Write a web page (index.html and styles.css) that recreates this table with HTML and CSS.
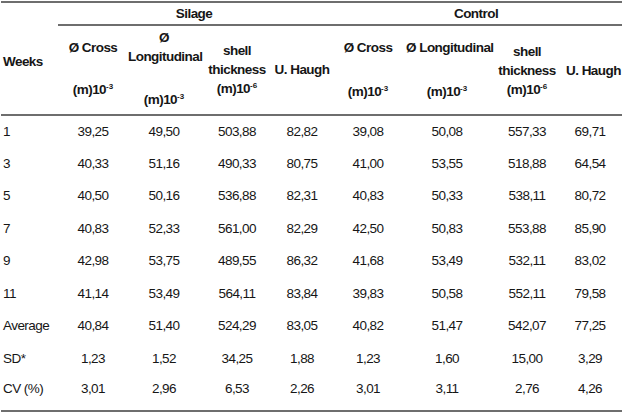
FILE: index.html
```html
<!DOCTYPE html>
<html>
<head>
<meta charset="utf-8">
<link rel="stylesheet" href="styles.css">
</head>
<body>
<table class="tbl">
  <colgroup>
    <col class="c-weeks">
    <col class="c-cross">
    <col class="c-long">
    <col class="c-shell">
    <col class="c-haugh">
    <col class="c-cross2">
    <col class="c-long2">
    <col class="c-shell2">
    <col class="c-haugh2">
  </colgroup>
  <thead>
    <tr class="group-row">
      <th class="weeks-head" rowspan="2"><div class="wk">Weeks</div></th>
      <th class="group" colspan="4">Silage</th>
      <th class="group" colspan="4">Control</th>
    </tr>
    <tr class="head-row">
      <th class="h s-cross"><div class="ln">Ø Cross</div><div class="ln unit u1">(m)10<sup>-3</sup></div></th>
      <th class="h s-long"><div class="ln">Ø</div><div class="ln">Longitudinal</div><div class="ln unit u2">(m)10<sup>-3</sup></div></th>
      <th class="h s-shell"><div class="ln">shell</div><div class="ln">thickness</div><div class="ln">(m)10<sup>-6</sup></div></th>
      <th class="h s-haugh"><div class="ln">U. Haugh</div></th>
      <th class="h c-cr"><div class="ln">Ø Cross</div><div class="ln unit u3">(m)10<sup>-3</sup></div></th>
      <th class="h c-lo"><div class="ln">Ø Longitudinal</div><div class="ln unit u3">(m)10<sup>-3</sup></div></th>
      <th class="h c-sh"><div class="ln">shell</div><div class="ln">thickness</div><div class="ln">(m)10<sup>-6</sup></div></th>
      <th class="h c-ha last"><div class="ln">U. Haugh</div></th>
    </tr>
  </thead>
  <tbody>
    <tr><td class="lbl">1</td><td>39,25</td><td>49,50</td><td>503,88</td><td>82,82</td><td>39,08</td><td>50,08</td><td>557,33</td><td class="last">69,71</td></tr>
    <tr><td class="lbl">3</td><td>40,33</td><td>51,16</td><td>490,33</td><td>80,75</td><td>41,00</td><td>53,55</td><td>518,88</td><td class="last">64,54</td></tr>
    <tr><td class="lbl">5</td><td>40,50</td><td>50,16</td><td>536,88</td><td>82,31</td><td>40,83</td><td>50,33</td><td>538,11</td><td class="last">80,72</td></tr>
    <tr><td class="lbl">7</td><td>40,83</td><td>52,33</td><td>561,00</td><td>82,29</td><td>42,50</td><td>50,83</td><td>553,88</td><td class="last">85,90</td></tr>
    <tr><td class="lbl">9</td><td>42,98</td><td>53,75</td><td>489,55</td><td>86,32</td><td>41,68</td><td>53,49</td><td>532,11</td><td class="last">83,02</td></tr>
    <tr><td class="lbl">11</td><td>41,14</td><td>53,49</td><td>564,11</td><td>83,84</td><td>39,83</td><td>50,58</td><td>552,11</td><td class="last">79,58</td></tr>
    <tr><td class="lbl">Average</td><td>40,84</td><td>51,40</td><td>524,29</td><td>83,05</td><td>40,82</td><td>51,47</td><td>542,07</td><td class="last">77,25</td></tr>
    <tr><td class="lbl">SD*</td><td>1,23</td><td>1,52</td><td>34,25</td><td>1,88</td><td>1,23</td><td>1,60</td><td>15,00</td><td class="last">3,29</td></tr>
    <tr class="final"><td class="lbl">CV (%)</td><td>3,01</td><td>2,96</td><td>6,53</td><td>2,26</td><td>3,01</td><td>3,11</td><td>2,76</td><td class="last">4,26</td></tr>
  </tbody>
</table>
</body>
</html>
```

FILE: styles.css
```css
html, body {
  margin: 0;
  padding: 0;
  background: #ffffff;
}

body {
  padding: 1px 0 0 1px;
  font-family: "Liberation Sans", Arial, sans-serif;
  font-size: 13.5px;
  letter-spacing: -0.55px;
  color: #161616;
}

.tbl {
  border-collapse: collapse;
  table-layout: fixed;
  width: 621px;
  border-top: 2px solid #6e6e6e;
  border-bottom: 2px solid #6e6e6e;
}

.c-weeks { width: 57px; }
.c-cross { width: 70px; }
.c-long { width: 72px; }
.c-shell { width: 74px; }
.c-haugh { width: 56px; }
.c-cross2 { width: 76px; }
.c-long2 { width: 82px; }
.c-shell2 { width: 78px; }
.c-haugh2 { width: 56px; }

th, td {
  padding: 0;
  font-weight: normal;
  text-align: center;
  white-space: nowrap;
}

th {
  font-weight: bold;
}

.group-row {
  height: 23px;
}

.group-row th.group {
  border-bottom: 2px solid #6e6e6e;
  vertical-align: middle;
  line-height: 20px;
}

.weeks-head {
  text-align: left;
  vertical-align: top;
  padding-left: 2px;
  border-bottom: 2px solid #6e6e6e;
}

.wk {
  padding-top: 49px;
  line-height: 19px;
}

.head-row {
  height: 90px;
}

.head-row th {
  vertical-align: top;
  border-bottom: 2px solid #6e6e6e;
}

.ln {
  line-height: 19px;
  height: 19px;
}

.s-cross { padding-top: 12px; }
.s-long { padding-top: 2px; }
.s-shell { padding-top: 15px; }
.s-haugh { padding-top: 34px; }
.c-cr, .c-lo { padding-top: 12px; }
.c-sh { padding-top: 16px; }
.c-ha { padding-top: 35px; }

.u1 { margin-top: 23px; }
.u2 { margin-top: 24px; }
.u3 { margin-top: 25px; }

sup {
  font-size: 8px;
  line-height: 0;
  vertical-align: 5px;
  letter-spacing: 0;
}

tbody tr {
  height: 32.5px;
}

tbody td {
  vertical-align: middle;
  line-height: 16px;
}

tbody td.lbl {
  text-align: left;
  padding-left: 2px;
}

th.last, td.last {
  padding-right: 8px;
}

tbody tr.final {
  height: 36px;
}

tbody tr.final td {
  padding-bottom: 8px;
}
```
